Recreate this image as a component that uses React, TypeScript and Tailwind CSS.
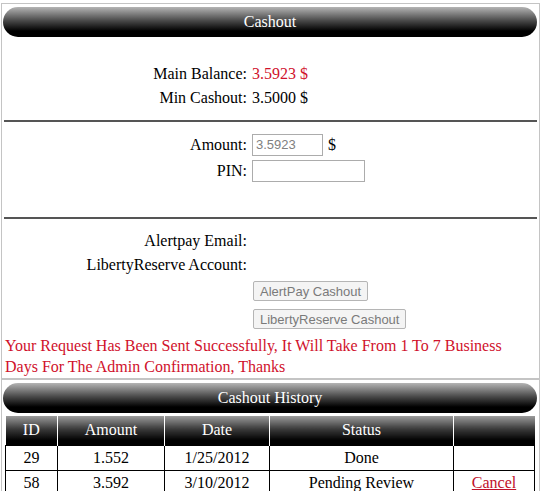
function Pill({ title }: { title: string }) {
  return (
    <div className="ml-[1px] mr-[2px] mt-[3px] h-[30px] rounded-[15px] bg-[linear-gradient(to_bottom,#b4b4b4_0%,#4a4a4a_45%,#000_80%)] flex items-center justify-center text-white text-[16px]">
      {title}
    </div>
  );
}

function Row({ label, children }: { label: string; children?: React.ReactNode }) {
  return (
    <div className="grid grid-cols-[245px_1fr] gap-x-[5px] items-center">
      <div className="text-right">{label}</div>
      <div className="flex items-center">{children}</div>
    </div>
  );
}

const history = [
  { id: 29, amount: "1.552", date: "1/25/2012", status: "Done", cancel: false },
  { id: 58, amount: "3.592", date: "3/10/2012", status: "Pending Review", cancel: true },
];

const btn =
  "font-[Liberation_Sans,Arial,sans-serif] h-[20px] px-[6px] text-[13px] leading-none text-[#7a7a7a] bg-[#f4f4f4] border border-[#b5b5b5] rounded-[2px]";
const th = "font-normal bg-[linear-gradient(to_bottom,#9a9a9a_0%,#3a3a3a_45%,#000_85%)]";

export default function App() {
  return (
    <div className="font-[Liberation_Serif,Times_New_Roman,serif] text-[16px] text-black bg-white w-[543px] h-[491px] overflow-hidden pl-[1px] pt-[3px]">
      {/* cashout box */}
      <div className="w-[539px] h-[376px] border border-[#c4c4c4]">
        <Pill title="Cashout" />

        <div className="mt-[25px] leading-[24px]">
          <Row label="Main Balance:">
            <span className="text-[#d0112b]">3.5923 $</span>
          </Row>
          <Row label="Min Cashout:">3.5000 $</Row>
        </div>

        <hr className="mt-[10px] mx-[2px] border-0 border-t-2 border-t-[#555]" />

        <div className="mt-[10px] leading-[26px]">
          <Row label="Amount:">
            <input
              readOnly
              value="3.5923"
              className="font-[Liberation_Sans,Arial,sans-serif] w-[71px] h-[22px] border border-[#acacac] px-[3px] text-[13px] text-[#808080] outline-none"
            />
            <span className="ml-[5px]">$</span>
          </Row>
          <Row label="PIN:">
            <input
              type="password"
              readOnly
              className="font-[Liberation_Sans,Arial,sans-serif] w-[113px] h-[22px] border border-[#acacac] px-[3px] text-[13px] outline-none"
            />
          </Row>
        </div>

        <hr className="mt-[33px] mx-[2px] border-0 border-t-2 border-t-[#555]" />

        <div className="mt-[10px] leading-[24px]">
          <Row label="Alertpay Email:" />
          <Row label="LibertyReserve Account:" />
        </div>

        <div className="pl-[251px] mt-[4px] flex flex-col items-start gap-[8px]">
          <button disabled className={btn}>
            AlertPay Cashout
          </button>
          <button disabled className={btn}>
            LibertyReserve Cashout
          </button>
        </div>

        <p className="mt-[6px] pl-[3px] pr-[20px] leading-[21px] text-[#d0112b]">
          Your Request Has Been Sent Successfully, It Will Take From 1 To 7 Business Days For The Admin Confirmation, Thanks
        </p>
      </div>

      {/* history box */}
      <div className="w-[539px] h-[120px] border border-[#c4c4c4]">
        <Pill title="Cashout History" />
        <table className="ml-[3px] mt-[3px] w-[530px] border-collapse text-center">
          <thead>
            <tr className="h-[29px] text-white">
              <th className={`w-[52px] border-r border-white ${th}`}>ID</th>
              <th className={`w-[107px] border-r border-white ${th}`}>Amount</th>
              <th className={`w-[105px] border-r border-white ${th}`}>Date</th>
              <th className={`w-[184px] border-r border-white ${th}`}>Status</th>
              <th className={th}></th>
            </tr>
          </thead>
          <tbody>
            {history.map((h) => (
              <tr key={h.id} className="h-[23px]">
                <td className="border border-black">{h.id}</td>
                <td className="border border-black">{h.amount}</td>
                <td className="border border-black">{h.date}</td>
                <td className="border border-black">{h.status}</td>
                <td className="border border-black">
                  {h.cancel && <a href="#" className="text-[#c0102a] underline">Cancel</a>}
                </td>
              </tr>
            ))}
          </tbody>
        </table>
      </div>
    </div>
  );
}
